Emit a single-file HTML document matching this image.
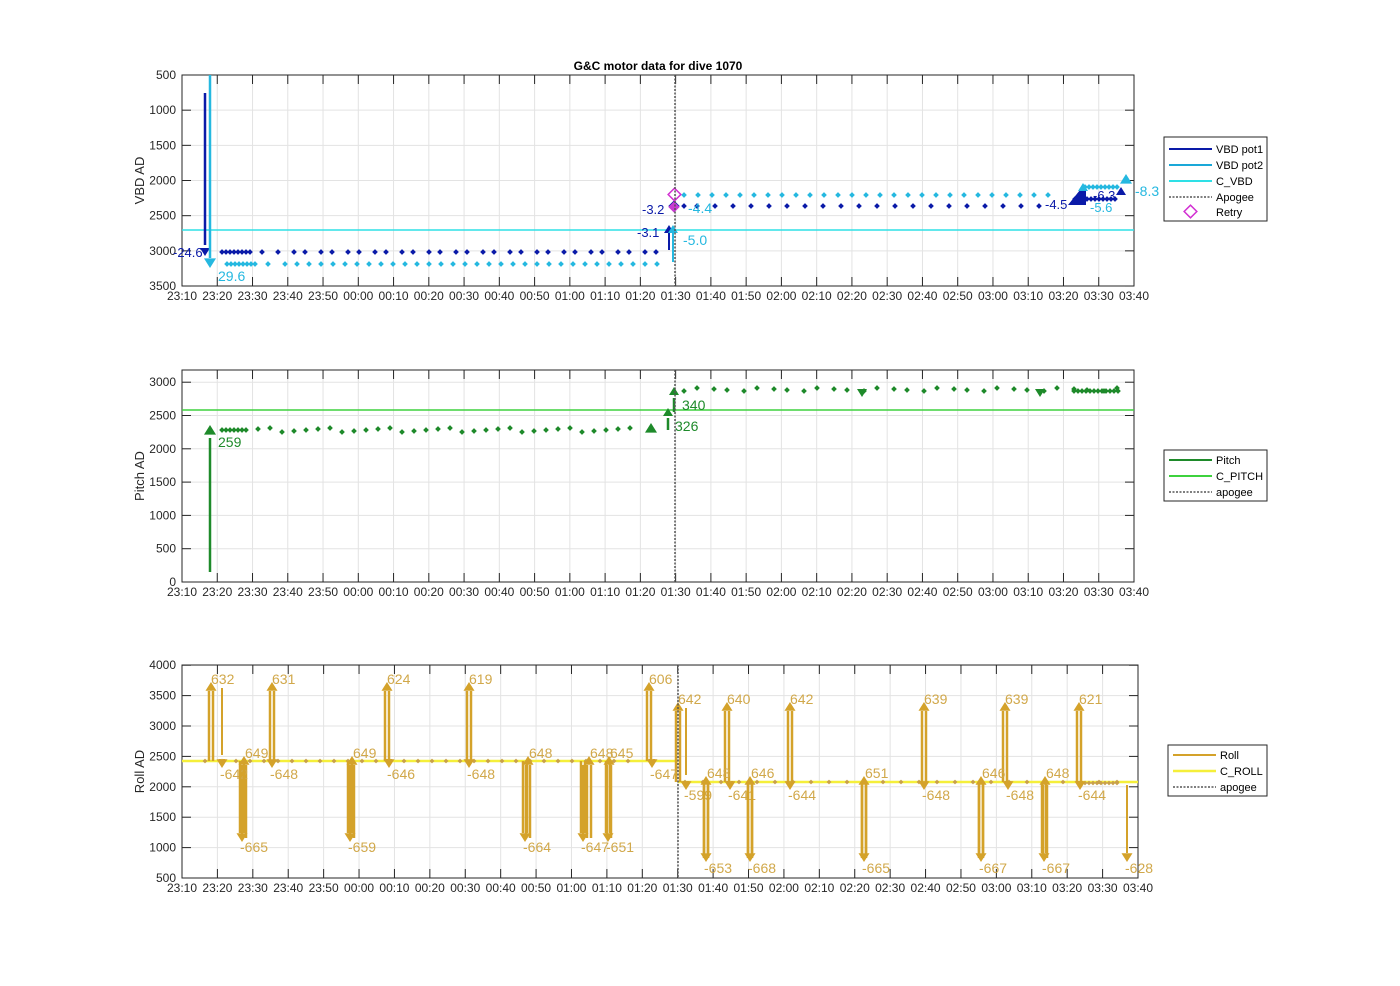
<!DOCTYPE html>
<html><head><meta charset="utf-8"><style>
html,body{margin:0;padding:0;background:#fff;width:1400px;height:986px;overflow:hidden}
svg{display:block;font-family:"Liberation Sans",Arial,sans-serif}
</style></head><body>
<svg id="s" width="1400" height="986" xmlns="http://www.w3.org/2000/svg"></svg>
<script>
const S=document.getElementById('s');let h='';
function ln(x1,y1,x2,y2,c,w,extra){h+=`<line x1="${x1}" y1="${y1}" x2="${x2}" y2="${y2}" stroke="${c}" stroke-width="${w}" ${extra||''}/>`;}
function tx(x,y,t,c,sz,anc,extra){h+=`<text x="${x}" y="${y}" fill="${c}" font-size="${sz}" text-anchor="${anc||'start'}" ${extra||''}>${t}</text>`;}
function dot(x,y,c,r){h+=`<rect x="${x-r}" y="${y-r}" width="${2*r}" height="${2*r}" fill="${c}" transform="rotate(45 ${x} ${y})"/>`;}
function tri(x,y,c,up,s){s=s||6;if(up)h+=`<polygon points="${x-s},${y+s*1.6} ${x+s},${y+s*1.6} ${x},${y}" fill="${c}"/>`;else h+=`<polygon points="${x-s},${y-s*1.6} ${x+s},${y-s*1.6} ${x},${y}" fill="${c}"/>`;}
const times=['23:10','23:20','23:30','23:40','23:50','00:00','00:10','00:20','00:30','00:40','00:50','01:00','01:10','01:20','01:30','01:40','01:50','02:00','02:10','02:20','02:30','02:40','02:50','03:00','03:10','03:20','03:30','03:40'];
function axes(L,R,T,B,yt,ylab,lab){
 const n=27,dx=(R-L)/n;
 for(let i=1;i<n;i++){const x=L+i*dx;ln(x,T,x,B,'#e3e3e3',1);}
 yt.forEach(v=>{ln(L,v[0],R,v[0],'#e3e3e3',1);});
 h+=`<rect x="${L}" y="${T}" width="${R-L}" height="${B-T}" fill="none" stroke="#262626" stroke-width="1"/>`;
 for(let i=0;i<=n;i++){const x=L+i*dx;ln(x,B,x,B-9,'#262626',1);ln(x,T,x,T+9,'#262626',1);tx(x,B+14,times[i],'#262626',12,'middle');}
 yt.forEach(v=>{ln(L,v[0],L+9,v[0],'#262626',1);ln(R,v[0],R-9,v[0],'#262626',1);tx(L-6,v[0]+4,v[1],'#262626',12,'end');});
 tx(144,(T+B)/2,ylab,'#262626',13,'middle',`transform="rotate(-90 144 ${(T+B)/2})"`);
}
// Plot 1
const y1=v=>75+(v-500)/500*35.17;
const yt1=[];for(let v=500;v<=3500;v+=500)yt1.push([y1(v),v]);
axes(182,1134,75,286,yt1,'VBD AD');
tx(658,70,'G&amp;C motor data for dive 1070','#000',12,'middle','font-weight="bold"');
ln(182,230,1134,230,'#2ee0e6',1.5);
// dots
const dk='#0a1aa8',cy='#25b8e0';
for(let x=222;x<=250;x+=4)dot(x,252,dk,2);
for(let x=262;x<=660;x+=(x%3?16:11))dot(x,252,dk,2);
for(let x=227;x<=255;x+=4)dot(x,264,cy,2);
for(let x=268;x<=660;x+=(x%3?17:12))dot(x,264,cy,2);
for(let x=684;x<=1040;x+=(x%2?18:13))dot(x,206,dk,2);
for(let x=684;x<=1060;x+=(x%2?19:14))dot(x,195,cy,2);
for(let x=1085;x<=1118;x+=4)dot(x,187,cy,2);
for(let x=1075;x<=1115;x+=4)dot(x,199,dk,2);
ln(205,93,205,245,dk,2.5);tri(205,256,dk,false,5);
ln(210,75,210,258,cy,2.5);tri(210,268,cy,false,6);
tx(173,257,'-24.6',dk,13);tx(218,281,'29.6',cy,14);
ln(669,250,669,232,dk,2);tri(669,225,dk,true,5);
ln(673,262,673,232,cy,2);tri(673,225,cy,true,5);
dot(674,206,dk,4);
h+=`<rect x="670" y="190" width="9" height="9" fill="none" stroke="#d22fd2" stroke-width="1.5" transform="rotate(45 674.5 194.5)"/>`;
h+=`<rect x="670" y="203" width="8" height="8" fill="#c83cd2" transform="rotate(45 674 207)"/>`;
tx(642,214,'-3.2',dk,13);tx(688,213,'-4.4',cy,14);
tx(637,237,'-3.1',dk,13);tx(683,245,'-5.0',cy,14);
ln(675,75,675,286,'#555',1.5,'stroke-dasharray="2,1.5"');
h+=`<polygon points="1068,205 1080,190 1086,190 1086,205" fill="${dk}"/>`;
tri(1083,183,cy,true,5);tri(1121,187,dk,true,5);tri(1126,174,cy,true,6);
tx(1045,209,'-4.5',dk,13);tx(1090,212,'-5.6',cy,13);tx(1093,200,'-6.3',dk,13);tx(1135,196,'-8.3',cy,14);
// legend 1
h+=`<rect x="1164" y="137" width="103" height="84" fill="#fff" stroke="#262626"/>`;
[[dk,'VBD pot1',149],['#1aa8d8','VBD pot2',165],['#2ee0e6','C_VBD',181]].forEach(a=>{ln(1169,a[2],1212,a[2],a[0],2);tx(1216,a[2]+4,a[1],'#000',11);});
ln(1169,197,1212,197,'#555',1.5,'stroke-dasharray="2,1.5"');tx(1216,201,'Apogee','#000',11);
h+=`<rect x="1186" y="207" width="9" height="9" fill="none" stroke="#d22fd2" stroke-width="1.5" transform="rotate(45 1190.5 211.5)"/>`;tx(1216,216,'Retry','#000',11);
// Plot 2
const y2=v=>582-v/500*33.3;
const yt2=[];for(let v=0;v<=3000;v+=500)yt2.push([y2(v),v]);
axes(182,1134,370,582,yt2,'Pitch AD');
const gr='#1e8a2a';
ln(182,410,1134,410,'#3ed23e',1.5);
for(let x=222;x<=248;x+=4)dot(x,430,gr,2);
for(let x=258;x<=630;x+=(x%2?16:12))dot(x,430+((x*7)%5)-2,gr,2);
for(let x=684;x<=1120;x+=(x%2?17:13))dot(x,391-((x*3)%4),gr,2);
for(let x=1074;x<=1120;x+=4)dot(x,391,gr,2);
ln(210,572,210,438,gr,2.5);tri(210,425,gr,true,6);tx(218,447,'259',gr,14);
tri(651,423,gr,true,6);
ln(668,430,668,418,gr,2.5);tri(668,408,gr,true,5);tx(675,431,'326',gr,14);
ln(674,412,674,398,gr,2.5);tri(674,387,gr,true,5);tx(682,410,'340',gr,14);
tri(862,397,gr,false,5);tri(1040,397,gr,false,5);
ln(675,370,675,582,'#555',1.5,'stroke-dasharray="2,1.5"');
h+=`<rect x="1164" y="450" width="103" height="51" fill="#fff" stroke="#262626"/>`;
ln(1169,460,1212,460,gr,2);tx(1216,464,'Pitch','#000',11);
ln(1169,476,1212,476,'#3ed23e',2);tx(1216,480,'C_PITCH','#000',11);
ln(1169,492,1212,492,'#555',1.5,'stroke-dasharray="2,1.5"');tx(1216,496,'apogee','#000',11);
// Plot 3
const y3=v=>878-(v-500)/500*30.4;
const yt3=[];for(let v=500;v<=4000;v+=500)yt3.push([y3(v),v]);
axes(182,1138,665,878,yt3,'Roll AD');
const go='#d4a22a',gt='#d1a84a';
ln(182,761,678,761,'#f5ef3a',2.5);ln(678,782,1138,782,'#f5ef3a',2.5);
for(let x=205;x<=640;x+=(x%2?17:14))dot(x,761,'#c9a04a',1.7);
for(let x=685;x<=1120;x+=(x%2?18:14))dot(x,782,'#c9a04a',1.7);
for(let x=1085;x<=1120;x+=4)dot(x,783,'#c9a04a',1.7);
function up(x,base,top,lab,dx,ly){ln(x-2,base,x-2,top+9,go,2.5);ln(x+2,base,x+2,top+9,go,2.5);tri(x,top,go,true,5.5);tx(x+(dx||0),ly,lab,gt,14);}
function dn(x,base,bot,lab,ly,thin){if(thin)ln(x,base,x,bot-9,go,2);else{ln(x-2,base,x-2,bot-9,go,2.5);ln(x+2,base,x+2,bot-9,go,2.5);}tri(x,bot,go,false,5.5);tx(x-2,ly,lab,gt,14);}
const B1=761,B2=782;
[[211,'632'],[272,'631'],[387,'624'],[469,'619'],[649,'606']].forEach(a=>up(a[0],B1,682,a[1],0,684));
[[678,'642'],[727,'640'],[790,'642'],[924,'639'],[1005,'639'],[1079,'621']].forEach(a=>up(a[0],B2,702,a[1],0,704));
ln(222,688,222,755,go,2);
[[244,'649'],[352,'649'],[528,'648'],[589,'648'],[609,'645']].forEach(a=>up(a[0],838,756,a[1],1,758));
[[706,'648'],[750,'646'],[864,'651'],[981,'646'],[1045,'648']].forEach(a=>up(a[0],858,776,a[1],1,778));
[[222,'-642'],[272,'-648'],[389,'-646'],[469,'-648'],[652,'-647']].forEach(a=>dn(a[0],B1,768,a[1],779));
[[242,'-665'],[350,'-659'],[525,'-664'],[583,'-647'],[608,'-651']].forEach(a=>dn(a[0],B1,842,a[1],852));
ln(583,765,583,835,go,2);
[[686,'-599'],[730,'-641'],[790,'-644'],[924,'-648'],[1008,'-648'],[1080,'-644']].forEach(a=>dn(a[0],B2,790,a[1],800));
[[706,'-653'],[750,'-668'],[864,'-665'],[981,'-667'],[1044,'-667']].forEach(a=>dn(a[0],B2,862,a[1],873));
ln(686,708,686,775,go,2);
dn(1127,785,862,'-628',873,true);
ln(678,665,678,878,'#555',1.5,'stroke-dasharray="2,1.5"');
h+=`<rect x="1168" y="745" width="99" height="51" fill="#fff" stroke="#262626"/>`;
ln(1173,755,1216,755,go,2);tx(1220,759,'Roll','#000',11);
ln(1173,771,1216,771,'#f5ef3a',2.5);tx(1220,775,'C_ROLL','#000',11);
ln(1173,787,1216,787,'#555',1.5,'stroke-dasharray="2,1.5"');tx(1220,791,'apogee','#000',11);
S.innerHTML=h;
</script>
</body></html>
